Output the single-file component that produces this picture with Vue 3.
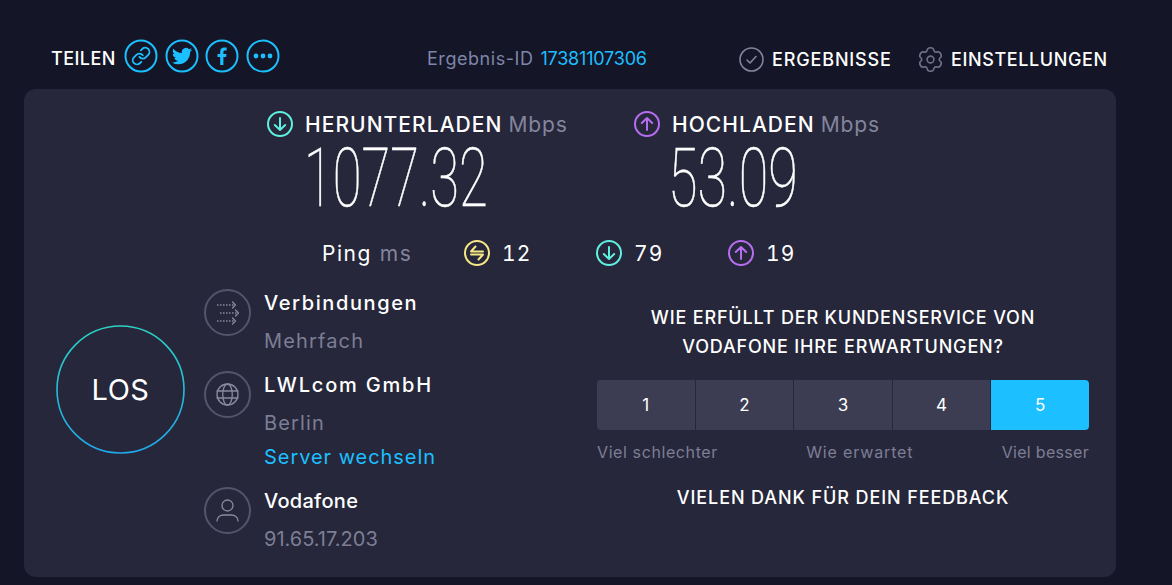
<script setup>
const scores = [1, 2, 3, 4, 5]

function polar(r, deg) {
  const a = (deg * Math.PI) / 180
  return `${(12.5 + r * Math.cos(a)).toFixed(2)} ${(12.5 + r * Math.sin(a)).toFixed(2)}`
}
const gearPath = (() => {
  let d = ''
  for (let k = 0; k < 6; k++) {
    const a = -90 + 60 * k
    d += `${k === 0 ? 'M' : 'L'}${polar(11.2, a - 14)} Q${polar(12.6, a)} ${polar(11.2, a + 14)} `
    d += `L${polar(9.4, a + 22)} Q${polar(8.2, a + 30)} ${polar(9.4, a + 38)} `
  }
  return d + 'Z'
})()
</script>

<template>
  <div class="page">
    <header class="top">
      <div class="share">
        <span class="share-label">TEILEN</span>
        <svg class="share-icon" viewBox="0 0 34 34"><circle cx="17" cy="17" r="15.5" /><g transform="translate(7 7) scale(.84)" fill="none" stroke="#1cbfff" stroke-width="2.2" stroke-linecap="round" stroke-linejoin="round"><path d="M10 13a5 5 0 0 0 7.54.54l3-3a5 5 0 0 0-7.07-7.07l-1.72 1.71" /><path d="M14 11a5 5 0 0 0-7.54-.54l-3 3a5 5 0 0 0 7.07 7.07l1.71-1.71" /></g></svg>
        <svg class="share-icon" viewBox="0 0 34 34"><circle cx="17" cy="17" r="15.5" /><g transform="translate(7 7) scale(.84)"><path class="solid" d="M23.95 4.57a10 10 0 0 1-2.82.77 4.96 4.96 0 0 0 2.16-2.72c-.95.55-2 .95-3.13 1.18a4.92 4.92 0 0 0-8.38 4.48C7.69 8.1 4.07 6.13 1.64 3.16a4.82 4.82 0 0 0-.67 2.48c0 1.71.87 3.21 2.19 4.1a4.9 4.9 0 0 1-2.23-.62v.06a4.92 4.92 0 0 0 3.95 4.83 5 5 0 0 1-2.21.08 4.94 4.94 0 0 0 4.6 3.42A9.87 9.87 0 0 1 0 19.54a13.94 13.94 0 0 0 7.55 2.21c9.05 0 14-7.5 14-13.98 0-.21 0-.42-.02-.63a9.94 9.94 0 0 0 2.46-2.55z" /></g></svg>
        <svg class="share-icon" viewBox="0 0 34 34"><circle cx="17" cy="17" r="15.5" /><path class="solid" d="M18.4 26v-8h2.7l.4-3.1h-3.1v-2c0-.9.3-1.5 1.5-1.5h1.7V8.6c-.3 0-1.300-.1-2.400-.1-2.400 0-4 1.400-4 4.100v2.300h-2.700V18h2.700v8z" /></svg>
        <svg class="share-icon" viewBox="0 0 34 34"><circle cx="17" cy="17" r="15.5" /><circle class="solid" cx="10" cy="17" r="2.400" /><circle class="solid" cx="17" cy="17" r="2.400" /><circle class="solid" cx="24" cy="17" r="2.400" /></svg>
      </div>
      <div class="result-id"><span class="result-label">Ergebnis-ID</span> <span class="blue">17381107306</span></div>
      <nav class="nav">
        <span class="nav-item results">
          <svg class="nav-icon" viewBox="0 0 25 25"><circle cx="12.500" cy="12.500" r="11.500" /><path d="M8 13l3 3 6-6.500" /></svg>
          ERGEBNISSE
        </span>
        <span class="nav-item settings">
          <svg class="nav-icon" viewBox="0 0 25 25"><circle cx="12.500" cy="12.500" r="3.400" /><path :d="gearPath" /></svg>
          EINSTELLUNGEN
        </span>
      </nav>
    </header>

    <main class="card">
      <section class="speeds">
        <div class="speed">
          <div class="speed-head">
            <svg class="stat-icon cyan" viewBox="0 0 26 26"><circle cx="13" cy="13" r="12" /><path d="M13 7v12M7.800 14l5.200 5 5.200-5" /></svg>
            <span class="speed-title">HERUNTERLADEN</span>
            <span class="unit">Mbps</span>
          </div>
          <div class="speed-value down">1077.32</div>
        </div>
        <div class="speed">
          <div class="speed-head">
            <svg class="stat-icon purple" viewBox="0 0 26 26"><circle cx="13" cy="13" r="12" /><path d="M13 19V7M7.800 12l5.200-5 5.200 5" /></svg>
            <span class="speed-title">HOCHLADEN</span>
            <span class="unit">Mbps</span>
          </div>
          <div class="speed-value up">53.09</div>
        </div>
      </section>

      <section class="ping">
        <div class="ping-label"><span class="ping-word">Ping</span> <span class="ping-unit">ms</span></div>
        <div class="ping-stat">
          <svg class="stat-icon yellow" viewBox="0 0 26 26"><circle cx="13" cy="13" r="12" /><path d="M19 11.500H7l4.500-5M7 14.500h12l-4.500 5" /></svg>
          <span>12</span>
        </div>
        <div class="ping-stat">
          <svg class="stat-icon cyan" viewBox="0 0 26 26"><circle cx="13" cy="13" r="12" /><path d="M13 7v12M7.800 14l5.200 5 5.200-5" /></svg>
          <span>79</span>
        </div>
        <div class="ping-stat">
          <svg class="stat-icon purple" viewBox="0 0 26 26"><circle cx="13" cy="13" r="12" /><path d="M13 19V7M7.800 12l5.200-5 5.200 5" /></svg>
          <span>19</span>
        </div>
      </section>

      <section class="lower">
        <div class="go-wrap">
          <div class="go">
            <svg class="go-ring" viewBox="0 0 129 129">
              <defs>
                <linearGradient id="ring" x1="0" y1="0" x2="0" y2="1">
                  <stop offset="0" stop-color="#2bd0c0" />
                  <stop offset="1" stop-color="#1fa8ea" />
                </linearGradient>
              </defs>
              <circle cx="64.500" cy="64.500" r="63.500" fill="none" stroke="url(#ring)" stroke-width="1.600" />
            </svg>
            <span class="go-text">LOS</span>
          </div>
        </div>

        <div class="info">
          <div class="info-row">
            <svg class="info-icon" viewBox="0 0 47 47"><circle cx="23.500" cy="23.500" r="22.500" /><g class="thin"><path stroke-dasharray="1.500 1.500" stroke-linecap="butt" d="M13 16h17M16 24h17M13 32h17" /><path d="M28.500 13l3 3-3 3M31.500 21l3 3-3 3M28.500 29l3 3-3 3" /></g></svg>
            <div class="info-text">
              <div class="name conn">Verbindungen</div>
              <div class="sub">Mehrfach</div>
            </div>
          </div>
          <div class="info-row second">
            <svg class="info-icon" viewBox="0 0 47 47"><circle cx="23.500" cy="23.500" r="22.500" /><g class="thin"><circle cx="23.500" cy="23.500" r="10.500" /><ellipse cx="23.500" cy="23.500" rx="4.800" ry="10.500" /><path d="M13 20h21M13 27h21" /></g></svg>
            <div class="info-text">
              <div class="name isp">LWLcom GmbH</div>
              <div class="sub">Berlin</div>
              <div class="switch">Server wechseln</div>
            </div>
          </div>
          <div class="info-row third">
            <svg class="info-icon" viewBox="0 0 47 47"><circle cx="23.500" cy="23.500" r="22.500" /><g class="thin"><circle cx="23.500" cy="18.500" r="5.500" /><path d="M13 34c0-4 3.500-6 6.500-6h8c3 0 6.500 2 6.500 6" /></g></svg>
            <div class="info-text">
              <div class="name">Vodafone</div>
              <div class="sub address">91.65.17.203</div>
            </div>
          </div>
        </div>

        <div class="survey">
          <p class="question">WIE ERFÜLLT DER KUNDENSERVICE VON<br />VODAFONE IHRE ERWARTUNGEN?</p>
          <div class="scale">
            <div v-for="n in scores" :key="n" class="score" :class="{ picked: n === 5 }">{{ n }}</div>
          </div>
          <div class="scale-labels">
            <span>Viel schlechter</span>
            <span class="label-mid">Wie erwartet</span>
            <span class="label-end">Viel besser</span>
          </div>
          <p class="thanks">VIELEN DANK FÜR DEIN FEEDBACK</p>
        </div>
      </section>
    </main>
  </div>
</template>

<style>
html, body { margin: 0; background: #141526; }
</style>

<style scoped>
.page {
  width: 1172px;
  height: 585px;
  overflow: hidden;
  background: #141526;
  color: #fff;
  font-family: Inter, "Noto Sans", sans-serif;
}
.top {
  height: 89px;
  box-sizing: border-box;
  padding: 39px 65px 0 51px;
  display: flex;
  font-size: 18px;
  font-weight: 500;
  white-space: nowrap;
}
.share { display: flex; align-items: center; height: 34px; width: 376px; flex: none; }
.share-label { width: 73px; padding-top: 4px; letter-spacing: .45px; }
.share-icon { width: 34px; height: 34px; margin-right: 6.5px; fill: none; stroke: #1cbfff; stroke-width: 2; }
.share-icon .solid { fill: #1cbfff; stroke: none; }
.result-id { line-height: 34px; padding-top: 3px; font-weight: 400; letter-spacing: -.2px; width: 312px; flex: none; }
.result-label { color: #7d86a8; letter-spacing: .55px; }
.blue { color: #1cbfff; margin-left: 2px; }
.nav { display: flex; height: 34px; padding-top: 3px; }
.nav-item { display: flex; align-items: center; gap: 8px; }
.results { width: 179px; letter-spacing: .85px; }
.settings { letter-spacing: .6px; }
.nav-icon { width: 25px; height: 25px; flex: none; fill: none; stroke: #84859b; stroke-width: 1.600; stroke-linecap: round; stroke-linejoin: round; }
.settings .nav-icon { stroke: #6e6f84; }
.card {
  margin-left: 24px;
  width: 1092px;
  height: 488px;
  box-sizing: border-box;
  padding-top: 22px;
  background: #26273b;
  border-radius: 12px;
}
.speeds { display: flex; padding-left: 243px; }
.speed { width: 367px; }
.speed-head { display: flex; align-items: center; height: 26px; white-space: nowrap; }
.stat-icon { width: 26px; height: 26px; flex: none; fill: none; stroke-width: 2; stroke-linecap: round; stroke-linejoin: round; }
.cyan { stroke: #5ff0e0; }
.purple { stroke: #b76df0; }
.yellow { stroke: #f5e783; }
.speed-title { margin-left: 12px; font-size: 21px; font-weight: 500; letter-spacing: 1.05px; }
.unit { margin-left: 6px; font-size: 21px; color: #84859d; letter-spacing: .9px; }
.speed-value {
  margin-top: 4px;
  height: 74px;
  font-family: Roboto, sans-serif;
  font-size: 82px;
  font-weight: 100;
  line-height: 74px;
  -webkit-text-stroke: .55px #fff;
  transform-origin: left center;
  white-space: nowrap;
}
.down { margin-left: 37px; transform: scaleX(.64); }
.up { margin-left: 34px; transform: scaleX(.658); }
.ping { display: flex; align-items: center; height: 26px; margin-top: 25px; padding-left: 298px; font-size: 21px; }
.ping-label { width: 142px; white-space: nowrap; }
.ping-word { letter-spacing: 1.5px; }
.ping-unit { margin-left: 2px; color: #84859d; letter-spacing: 1.6px; }
.ping-stat { display: flex; align-items: center; gap: 12px; width: 132px; letter-spacing: 1.2px; font-variant-numeric: tabular-nums; }
.lower { display: flex; margin-top: 23px; }
.go-wrap { width: 180px; padding: 36px 0 0 32px; box-sizing: border-box; }
.go { position: relative; width: 129px; height: 129px; display: flex; align-items: center; justify-content: center; }
.go-ring { position: absolute; inset: 0; width: 129px; height: 129px; }
.go-text { font-size: 29px; font-weight: 400; letter-spacing: .5px; }
.info { width: 393px; }
.info-row { display: flex; gap: 13px; }
.second { margin-top: 6px; }
.third { margin-top: 20px; }
.info-icon { width: 47px; height: 47px; flex: none; fill: none; stroke: #54556a; stroke-width: 2; }
.info-icon .thin { stroke: #8a8b9f; stroke-width: 1.300; stroke-linecap: round; stroke-linejoin: round; }
.name { height: 28px; line-height: 28px; font-size: 20px; font-weight: 500; letter-spacing: .3px; }
.conn { letter-spacing: 1.6px; }
.isp { letter-spacing: 1.8px; }
.sub { height: 48px; line-height: 48px; font-size: 20px; color: #7d7e95; letter-spacing: 1.15px; }
.address { letter-spacing: 0; }
.switch { height: 20px; line-height: 20px; font-size: 20px; color: #1cbfff; letter-spacing: .95px; }
.survey { width: 492px; padding-top: 14px; text-align: center; }
.question { margin: 0; font-size: 18px; line-height: 29px; font-weight: 500; letter-spacing: .82px; white-space: nowrap; }
.scale { display: flex; gap: 1px; height: 50px; margin-top: 19px; border-radius: 4px; overflow: hidden; }
.score { flex: 1; display: flex; align-items: center; justify-content: center; background: #3c3d52; font-size: 17px; }
.picked { background: #1cbfff; }
.scale-labels { display: flex; justify-content: space-between; margin-top: 12px; font-size: 16px; line-height: 20px; color: #7d7e95; letter-spacing: .6px; }
.label-mid { letter-spacing: .85px; }
.label-end { letter-spacing: .3px; }
.thanks { margin: 26px 0 0; font-size: 18px; line-height: 20px; font-weight: 500; letter-spacing: .9px; white-space: nowrap; }
</style>
